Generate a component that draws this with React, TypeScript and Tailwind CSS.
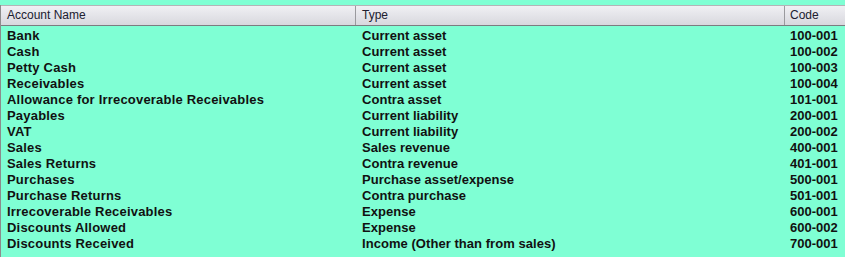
import React from 'react'

const rows: [string, string, string][] = [
  ['Bank', 'Current asset', '100-001'],
  ['Cash', 'Current asset', '100-002'],
  ['Petty Cash', 'Current asset', '100-003'],
  ['Receivables', 'Current asset', '100-004'],
  ['Allowance for Irrecoverable Receivables', 'Contra asset', '101-001'],
  ['Payables', 'Current liability', '200-001'],
  ['VAT', 'Current liability', '200-002'],
  ['Sales', 'Sales revenue', '400-001'],
  ['Sales Returns', 'Contra revenue', '401-001'],
  ['Purchases', 'Purchase asset/expense', '500-001'],
  ['Purchase Returns', 'Contra purchase', '501-001'],
  ['Irrecoverable Receivables', 'Expense', '600-001'],
  ['Discounts Allowed', 'Expense', '600-002'],
  ['Discounts Received', 'Income (Other than from sales)', '700-001'],
]

const App = () => {
  return (
    <div className="w-[845px] h-[257px] bg-[#7fffd4] pt-[5px] overflow-hidden font-['Liberation_Sans',Arial,sans-serif]">
      <div className="h-full border-l border-[#8c8c8c]">
        {/* header */}
        <div className="grid grid-cols-[355px_429px_1fr] h-[21px] border-t border-b border-t-[#b4b4b8] border-b-[#7c7c80] bg-gradient-to-b from-[#f0f0f4] to-[#d8d8de] text-[12px] text-[#202030]">
          <div className="pl-[6px] border-r border-[#9a9a9e] leading-[19px]">Account Name</div>
          <div className="pl-[6px] border-r border-[#9a9a9e] leading-[19px]">Type</div>
          <div className="pl-[5px] leading-[19px]">Code</div>
        </div>
        {/* rows */}
        <div className="pt-[2px] text-[13px] font-bold text-[#111]">
          {rows.map(([name, type, code]) => (
            <div key={code} className="grid grid-cols-[356px_429px_1fr] h-[16px] leading-[16px]">
              <div className="pl-[6px] whitespace-nowrap tracking-[0.2px]">{name}</div>
              <div className="pl-[5px] whitespace-nowrap tracking-[0.05px]">{type}</div>
              <div className="pl-[4px] whitespace-nowrap">{code}</div>
            </div>
          ))}
        </div>
      </div>
    </div>
  )
}

export default App
